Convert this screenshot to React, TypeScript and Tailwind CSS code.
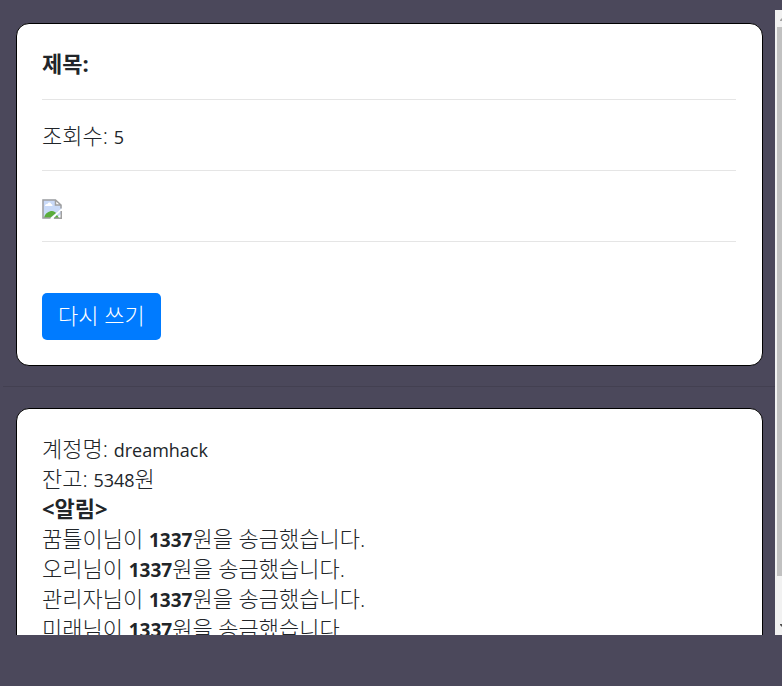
import type { ReactNode } from 'react';

const transfers = [
  { id: 1, sender: '꿈틀이', amount: 1337 },
  { id: 2, sender: '오리', amount: 1337 },
  { id: 3, sender: '관리자', amount: 1337 },
  { id: 4, sender: '미래', amount: 1337 },
];

function Card({ children }: { children: ReactNode }) {
  return <section className="rounded-[13px] border border-black bg-white pt-6 pr-[26px] pb-[25px] pl-[25px]">{children}</section>;
}

// latin letters and digits run slightly smaller than hangul
function Latin({ children }: { children: ReactNode }) {
  return <span className="text-[18px] leading-none font-normal">{children}</span>;
}

function BrokenImage() {
  return (
    <svg role="img" aria-label="image" width="20" height="20" viewBox="0 0 20 20">
      <path d="M0.5 0.5H13.5L19.5 6V9.500L8 19.5H0.5Z" fill="#c9daf8" />
      <path d="M3 7C3 5 5 5 5.500 5C6 3 9 3 9 5C10.500 5 11 7 10 7Z" fill="#fff" />
      <path d="M2 19C3 14 7 12 10 12C12 12 13 13 14 14L8 19Z" fill="#5aad3b" />
      <path d="M13.500 0.500V6H19.500Z" fill="#fff" />
      <path d="M19 9.500V6L13.500 1H1V19H8.500M13.500 1V6H19" fill="none" stroke="#a0a0a0" strokeWidth="1.500" />
      <path d="M19 12L11 19.500H14L19 15Z" fill="#c9daf8" />
      <path d="M12 19L15 16L17 19Z" fill="#5aad3b" />
      <path d="M12 19.250H19.250V12" fill="none" stroke="#a0a0a0" strokeWidth="1.500" />
    </svg>
  );
}

function Scrollbar() {
  return (
    <div className="flex w-[7px] shrink-0 flex-col overflow-hidden bg-[#f1f1f1] pl-[2px]" aria-hidden="true">
      <svg className="h-[17px] w-full shrink-0" viewBox="0 0 5 17">
        <path d="M3 11V10L7 6V11Z" fill="#a3a3a3" />
      </svg>
      <div className="grow bg-[#c1c1c1]" />
      <div className="h-[42px] shrink-0" />
      <svg className="h-[17px] w-full shrink-0" viewBox="0 0 5 17">
        <path d="M3 6H7V11L3 7Z" fill="#505050" />
      </svg>
    </div>
  );
}

export default function App() {
  return (
    <div className="min-h-screen bg-[#4b485b] pt-[10px] font-['Open_Sans','Noto_Sans_CJK_KR',sans-serif] text-[22px] leading-[30px] font-light text-[#212529]">
      <div className="flex h-[calc(100vh-61px)] overflow-hidden">
        <main className="min-w-0 grow overflow-hidden pt-[13px] pr-3 pl-4">
          <Card>
            <h1 className="font-bold">제목:</h1>
            <hr className="mt-[21px] mb-5 border-black/10" />
            <p>조회수: <Latin>5</Latin></p>
            <hr className="my-5 border-black/10" />
            <div className="flex h-[30px] items-end pb-[2px]">
              <BrokenImage />
            </div>
            <hr className="mt-5 border-black/10" />
            <button
              type="button"
              className="mt-[51px] block rounded-[5px] bg-[#007bff] px-4 pt-[7px] pb-[10px] text-white"
            >
              다시 쓰기
            </button>
          </Card>
          <hr className="-mr-3 -ml-[13px] mt-5 mb-[21px] border-black/10" />
          <Card>
            <p>계정명: <Latin>dreamhack</Latin></p>
            <p>잔고: <Latin>5348</Latin>원</p>
            <h2 className="font-bold">&lt;알림&gt;</h2>
            <ul>
              {transfers.map((t) => (
                <li key={t.id}>
                  {t.sender}님이 <b className="text-[19px] leading-none font-bold">{t.amount}</b>원을 송금했습니다.
                </li>
              ))}
            </ul>
          </Card>
        </main>
        <Scrollbar />
      </div>
    </div>
  );
}
